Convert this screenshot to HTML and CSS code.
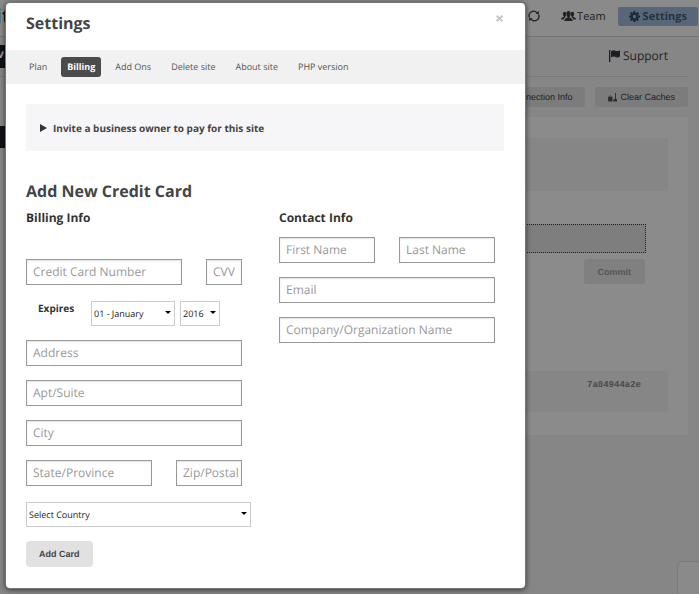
FILE: index.html
```html
<!DOCTYPE html>
<html lang="en">
<head>
<meta charset="utf-8">
<title>Settings</title>
<link rel="stylesheet" href="styles.css">
</head>
<body>
<div class="page">
  <header class="topbar">
    <span class="logo"><span class="logo-accent">i</span>t</span>
    <nav class="topnav">
      <button class="icon-btn" type="button" aria-label="Refresh">
        <svg width="12" height="12" viewBox="0 0 12 12" fill="none" stroke="#1f1f1f" stroke-width="1.3"><path d="M1.4 7.6A4.6 4.6 0 0 1 8.8 2.5M10.6 4.4A4.6 4.6 0 0 1 3.2 9.5"/><path d="M10.8.8v3.1H7.6zM1.2 11.2V8.1h3.2z" fill="#1f1f1f" stroke="none"/></svg>
      </button>
      <a class="team" href="#team">
        <svg width="15" height="10" viewBox="0 0 15 10" fill="#222"><ellipse cx="3.6" cy="3" rx="1.7" ry="2.2"/><ellipse cx="11.4" cy="3" rx="1.7" ry="2.2"/><path d="M0 8.5C0 6.6 1.6 6.6 2.8 5.8V4h1.7v1.8L4.2 6.4C3 7 2.9 7.6 2.8 8.5zM15 8.5C15 6.6 13.4 6.6 12.2 5.8V4h-1.7v1.8l.3.6c1.2.6 1.3 1.2 1.4 2.1z"/><ellipse cx="7.5" cy="3" rx="2.1" ry="2.9"/><path d="M3.3 10c0-2.3 1.5-2.6 3.2-3.5V4.5h2v2c1.7.9 3.2 1.2 3.2 3.5z"/></svg>
        Team
      </a>
      <button class="settings-btn" type="button">
        <svg width="11" height="11" viewBox="0 0 16 16"><path fill="#202833" fill-rule="evenodd" d="M6.8 0h2.4l.4 2.200 1.400.6 1.900-1.300 1.700 1.700-1.300 1.900.6 1.400 2.100.4v2.400l-2.200.4-.6 1.400 1.300 1.900-1.700 1.700-1.900-1.300-1.300.6-.4 2H6.800l-.4-2.100-1.400-.6-1.900 1.300-1.700-1.700 1.300-1.900-.6-1.400L0 9.200V6.800l2.200-.4.6-1.400L1.500 3.100l1.700-1.700 1.900 1.300 1.300-.6zM8 5.400a2.600 2.600 0 1 0 0 5.200 2.600 2.600 0 0 0 0-5.200z"/></svg>
        Settings
      </button>
    </nav>
  </header>
  <div class="subbar">
    <span class="side-tab">v</span>
    <a class="support" href="#support">
      <svg width="11" height="12" viewBox="0 0 11 12" fill="#1d1d24"><path d="M0 0h1.300v12H0zM2 1.200c2-1.500 3.300-1 4.500-.5 1.500.6 2.500.5 4.500-.5v6.300c-2 1.200-3.200 1-4.600.5C5 6.500 4 6.300 2 7.500z"/></svg>
      Support
    </a>
  </div>
  <div class="toolbar">
    <button class="tool" type="button">Connection Info</button>
    <button class="tool" type="button">
      <svg width="9" height="9" viewBox="0 0 9 9" fill="#2d2d2d"><path d="M0 4h4.500v4.500H.3zM7 0h.9v6.500H7zM5.300 7l1.200-1.200h1.800L9 7v1.500H5.300z"/><path d="M.5 4C.8 2.500 3.700 2.500 4 4" fill="none" stroke="#2d2d2d" stroke-width=".6"/></svg>
      Clear Caches
    </button>
  </div>
  <div class="side-block"></div>
  <main class="panel">
    <div class="band band-top"></div>
    <div class="message"></div>
    <button class="commit" type="button">Commit</button>
    <div class="band band-log"><code>7a84944a2e</code></div>
  </main>
</div>
<div class="chat"></div>

<div class="modal" role="dialog" aria-labelledby="title">
  <div class="modal-head">
    <h1 id="title">Settings</h1>
    <button class="close" type="button" aria-label="Close"><svg width="7" height="7" viewBox="0 0 7 7" stroke="#c6c6c6" stroke-width="2"><path d="M.7.7l5.600 5.600M6.300.7L.7 6.300"/></svg></button>
  </div>
  <nav class="tabs">
    <a href="#plan">Plan</a>
    <a href="#billing" class="active">Billing</a>
    <a href="#addons">Add Ons</a>
    <a href="#delete">Delete site</a>
    <a href="#about">About site</a>
    <a href="#php">PHP version</a>
  </nav>
  <div class="modal-body">
    <details class="invite">
      <summary><svg width="7" height="8" viewBox="0 0 7 8"><path d="M0 0l7 4-7 4z" fill="#33333b"/></svg>Invite a business owner to pay for this site</summary>
    </details>
    <h2>Add New Credit Card</h2>
    <form class="columns">
      <section>
        <h3>Billing Info</h3>
        <div class="groups">
          <div class="row">
            <input class="grow" type="text" placeholder="Credit Card Number" aria-label="Credit Card Number">
            <input class="cvv" type="text" placeholder="CVV" aria-label="CVV">
          </div>
          <div class="expires">
            <label for="month">Expires</label>
            <span class="select month"><select id="month"><option>01 - January</option></select></span>
            <span class="select year"><select aria-label="Year"><option>2016</option></select></span>
          </div>
          <div class="fields">
            <input type="text" placeholder="Address" aria-label="Address">
            <input type="text" placeholder="Apt/Suite" aria-label="Apt/Suite">
            <input type="text" placeholder="City" aria-label="City">
            <div class="row">
              <input class="grow" type="text" placeholder="State/Province" aria-label="State/Province">
              <input class="zip" type="text" placeholder="Zip/Postal" aria-label="Zip/Postal">
            </div>
          </div>
          <span class="select country"><select aria-label="Country"><option>Select Country</option></select></span>
          <button class="add" type="submit">Add Card</button>
        </div>
      </section>
      <section>
        <h3>Contact Info</h3>
        <div class="fields">
          <div class="row">
            <input class="grow" type="text" placeholder="First Name" aria-label="First Name">
            <input class="grow" type="text" placeholder="Last Name" aria-label="Last Name">
          </div>
          <input type="text" placeholder="Email" aria-label="Email">
          <input type="text" placeholder="Company/Organization Name" aria-label="Company/Organization Name">
        </div>
      </section>
    </form>
  </div>
</div>
</body>
</html>
```
FILE: styles.css
```css
* { box-sizing: border-box; }

body {
  margin: 0;
  min-height: 100vh;
  background: #868686;
  color: #222;
  font-family: "Open Sans", sans-serif;
  text-rendering: geometricPrecision;
  overflow: hidden;
}

h1, h2, h3 { margin: 0; font-weight: 700; }
a { color: inherit; text-decoration: none; }
button, input, select { font-family: inherit; margin: 0; text-rendering: inherit; }
button { border: 0; background: none; padding: 0; color: inherit; }
svg { display: block; flex: none; }

/* Dimmed page behind the dialog */
.topbar {
  display: flex;
  justify-content: space-between;
  height: 37px;
  border-bottom: 1px solid #777;
  background: #8a8a8a;
}
.logo { font-size: 20px; line-height: 32px; font-weight: 700; color: #111; margin-left: -4px; }
.logo-accent { color: #4c6f80; }
.topnav { display: flex; align-items: center; padding: 0 1px 4px 0; font-size: 11px; }
.icon-btn { margin-right: 21px; }
.team { display: flex; align-items: center; gap: 1px; margin-right: 12px; }
.settings-btn {
  display: flex;
  align-items: center;
  gap: 3px;
  height: 19px;
  padding: 0 11px;
  border-radius: 2px;
  background: #586679;
  color: #2b323b;
  font-size: 11px;
  font-weight: 700;
}
.subbar {
  display: flex;
  justify-content: space-between;
  align-items: center;
  height: 40px;
  margin-right: 11px;
  border-bottom: 1px solid #797979;
}
.side-tab { width: 20px; height: 23px; background: #101018; color: #999; font-size: 12px; line-height: 18px; font-weight: 700; margin-left: -3px; }
.support { display: flex; align-items: center; gap: 3px; padding: 0 20px 2px 0; font-size: 12px; }
.toolbar { display: flex; justify-content: flex-end; gap: 10px; padding: 10px 11px; }
.tool {
  display: flex;
  align-items: center;
  gap: 3px;
  height: 20px;
  padding: 0 13px;
  border-radius: 3px;
  background: #7c7c7c;
  font-family: "Liberation Sans", sans-serif;
  font-size: 9px;
}
.side-block { position: absolute; left: 0; top: 126px; width: 20px; height: 22px; background: #101018; }
.panel { margin: 0 11px 0 20px; padding: 21px 20px 23px; background: #8b8b8b; }
.band { background: #868686; }
.band-top { height: 53px; }
.message { height: 29px; margin: 33px 22px 0 0; border: 1px dotted #222; background: #7e7e7e; }
.commit {
  display: block;
  margin: 6px 23px 0 auto;
  height: 25px;
  padding: 0 14px;
  border-radius: 3px;
  background: #808080;
  color: #555;
  font-family: "Liberation Sans", sans-serif;
  font-size: 9px;
  font-weight: 700;
}
.band-log { height: 41px; margin-top: 87px; padding: 8px 27px; }
.band-log code { display: block; text-align: right; font-family: "Liberation Mono", monospace; font-size: 9px; font-weight: 700; line-height: 12px; color: #4a4a4a; }
.chat {
  position: absolute;
  right: -3px;
  bottom: -3px;
  width: 25px;
  height: 36px;
  border: 1px solid #7b7b7b;
  border-radius: 6px;
  background: #8a8a8a;
}

/* Dialog */
.modal {
  position: absolute;
  top: 3px;
  left: 6px;
  width: calc(100% - 12px);
  max-width: 519px;
  padding-bottom: 21px;
  border-radius: 4px;
  background: #fff;
  box-shadow: 0 0 0 1px #777, 0 1px 5px 1px rgba(0, 0, 0, .6);
  color: #444;
}
.modal-head { display: flex; justify-content: space-between; align-items: flex-start; height: 47px; padding: 9px 22px 0 20px; }
h1, h2 { font-size: 16px; line-height: 22px; }
.close { padding: 3px 0; }
.tabs { display: flex; align-items: center; gap: 8px; height: 34px; padding: 0 17px; background: #f1f1f1; font-size: 9px; }
.tabs a { padding: 0 6px; line-height: 20px; border-radius: 3px; color: #555; }
.tabs .active { background: #4b4b4b; color: #fff; font-weight: 700; }
.modal-body { padding: 20px 21px 0 20px; }
.invite { background: #f6f6f9; }
.invite summary { display: flex; align-items: center; gap: 6px; height: 47px; padding-left: 14px; font-size: 10px; font-weight: 700; list-style: none; }
h2 { margin-top: 29px; }
.columns { display: grid; grid-template-columns: 225px 216px; gap: 28px; margin-top: 8px; }
h3 { font-size: 12px; line-height: 16px; color: #333; }
h3 + .fields { margin-top: 11px; }
h3 + .groups { margin-top: 33px; }
.groups { display: flex; flex-direction: column; align-items: flex-start; gap: 15px; }
.fields { display: flex; flex-direction: column; gap: 14px; width: 216px; }
.row { display: flex; gap: 24px; width: 216px; }
input {
  width: 100%;
  height: 26px;
  padding: 0 6px 1px;
  border: 1px solid #999;
  border-radius: 0;
  background: #fff;
  box-shadow: inset 0 1px 2px rgba(0, 0, 0, .12);
  font-size: 12px;
}
input::placeholder { color: #999; opacity: 1; }
.grow { flex: 1; min-width: 0; }
.cvv { width: 36px; }
.zip { width: 66px; padding-right: 2px; }
.expires { display: flex; }
.expires label { width: 65px; padding-left: 12px; font-size: 10px; line-height: 17px; font-weight: 700; color: #333; }
.select { position: relative; display: block; height: 25px; }
.select::after {
  content: "";
  position: absolute;
  right: 4px;
  top: 11px;
  border: 3px solid transparent;
  border-top-color: #000;
  border-bottom: 0;
  pointer-events: none;
}
.select select {
  appearance: none;
  width: 100%;
  height: 100%;
  padding: 0 2px;
  border: 1px solid #ccc;
  border-radius: 0;
  background: #fff;
  color: #222;
  font-size: 9px;
}
.month { width: 84px; margin-right: 5px; }
.year { width: 40px; }
.country { width: 225px; }
.add {
  height: 26px;
  padding: 0 13px;
  border-radius: 4px;
  background: #e1e1e1;
  color: #444;
  font-family: "Liberation Sans", sans-serif;
  font-size: 9px;
  font-weight: 700;
}
```
